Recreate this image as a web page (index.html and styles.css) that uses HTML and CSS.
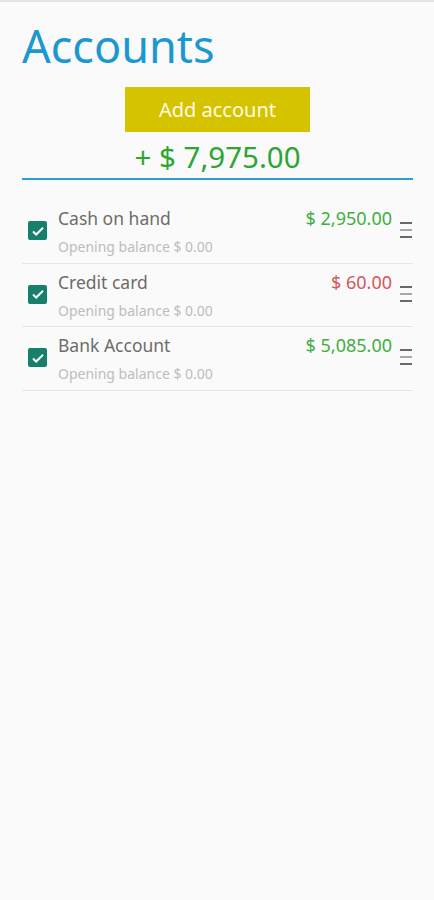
FILE: index.html
```html
<!DOCTYPE html>
<html lang="en">
<head>
    <meta charset="UTF-8">
    <meta name="viewport" content="width=device-width, initial-scale=1.0">
    <title>Accounts</title>
    <link rel="stylesheet" href="styles.css">
</head>
<body>
    <div class="topbar"></div>
    <main class="page">
        <h1 class="title">Accounts</h1>
        <div class="add-wrap">
            <button type="button" class="add-btn">Add account</button>
        </div>
        <div class="total">+ $ 7,975.00</div>

        <ul class="accounts">
            <li class="account">
                <span class="check"><svg viewBox="0 0 18 18" width="18" height="18"><path d="M4 9.5l3.2 3L14 5.8" fill="none" stroke="#fff" stroke-width="2"/></svg></span>
                <div class="info">
                    <div class="name">Cash on hand</div>
                    <div class="opening">Opening balance $ 0.00</div>
                </div>
                <div class="amount positive">$ 2,950.00</div>
                <span class="handle"><i></i><i></i><i></i></span>
            </li>
            <li class="account">
                <span class="check"><svg viewBox="0 0 18 18" width="18" height="18"><path d="M4 9.5l3.2 3L14 5.8" fill="none" stroke="#fff" stroke-width="2"/></svg></span>
                <div class="info">
                    <div class="name">Credit card</div>
                    <div class="opening">Opening balance $ 0.00</div>
                </div>
                <div class="amount negative">$ 60.00</div>
                <span class="handle"><i></i><i></i><i></i></span>
            </li>
            <li class="account">
                <span class="check"><svg viewBox="0 0 18 18" width="18" height="18"><path d="M4 9.5l3.2 3L14 5.8" fill="none" stroke="#fff" stroke-width="2"/></svg></span>
                <div class="info">
                    <div class="name">Bank Account</div>
                    <div class="opening">Opening balance $ 0.00</div>
                </div>
                <div class="amount positive">$ 5,085.00</div>
                <span class="handle"><i></i><i></i><i></i></span>
            </li>
        </ul>
    </main>
</body>
</html>
```

FILE: styles.css
```css
body {
    margin: 0;
    font-family: "Noto Sans", "Open Sans", sans-serif;
    background-color: #fafafa;
    height: 900px;
}
.topbar {
    height: 2px;
    background-color: #e4e4e4;
}
.page {
    padding: 0 21px 0 22px;
}
.title {
    margin: 14px 0 0 0;
    font-size: 45px;
    font-weight: normal;
    line-height: 60px;
    color: #1b98cf;
}
.add-wrap {
    display: flex;
    justify-content: center;
    margin-top: 11px;
}
.add-btn {
    width: 185px;
    height: 45px;
    border: none;
    background-color: #d6c300;
    color: #fffbe0;
    font-family: inherit;
    font-size: 20px;
    padding: 0;
}
.total {
    text-align: center;
    font-size: 29.5px;
    line-height: 42px;
    color: #2ea533;
    height: 42px;
    padding-top: 4px;
    border-bottom: 2px solid #2a9fcf;
}
.accounts {
    list-style: none;
    margin: 20px 0 0 0;
    padding: 0;
}
.account {
    display: flex;
    align-items: flex-start;
    height: 62.5px;
    border-bottom: 1.5px solid #e6e6e6;
}
.check {
    width: 19px;
    height: 19px;
    margin: 21px 11px 0 6px;
    border-radius: 2px;
    background-color: #17806c;
    display: flex;
    align-items: center;
    justify-content: center;
}
.info {
    flex: 1;
    padding-top: 5px;
}
.name {
    font-size: 17.5px;
    line-height: 26px;
    color: #6c6c6c;
}
.opening {
    margin-top: 4px;
    font-size: 14px;
    line-height: 24px;
    color: #bdbdbd;
}
.amount {
    font-size: 18px;
    line-height: 26px;
    padding-top: 5px;
}
.positive {
    color: #3fae3f;
}
.negative {
    color: #d25757;
}
.handle {
    width: 12px;
    margin: 22px 1px 0 8px;
    display: flex;
    flex-direction: column;
    gap: 5px;
}
.handle i {
    display: block;
    height: 2px;
    background-color: #6a6a6a;
}
.handle i:nth-child(2) {
    background-color: #a8a8a8;
}
```
